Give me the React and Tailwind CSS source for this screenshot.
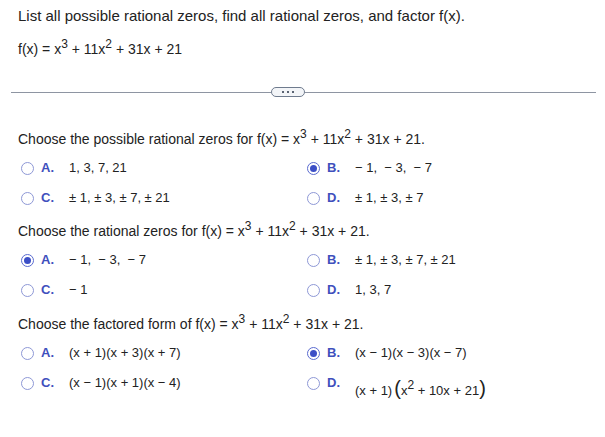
import React from 'react';

const Label = ({ children }) => (
  <span className="w-[28px] shrink-0 font-bold text-[#3f50bd]">{children}</span>
);

function Radio({ checked }) {
  return checked ? (
    <span className="w-[13px] h-[13px] rounded-full border border-[#5a6bd0] bg-white flex items-center justify-center shrink-0">
      <span className="w-[7px] h-[7px] rounded-full bg-[#3c4fc6]" />
    </span>
  ) : (
    <span className="w-[13px] h-[13px] rounded-full border border-[#8e98d6] bg-white shrink-0" />
  );
}

function Option({ letter, checked, children, valueClass = 'whitespace-pre' }) {
  return (
    <div className="h-[30px] flex items-center">
      <Radio checked={checked} />
      <span className="w-[7px] shrink-0" />
      <Label>{letter}</Label>
      <span className={valueClass}>{children}</span>
    </div>
  );
}

const Sup = ({ children }) => (
  <span className="relative -top-[6px] text-[12px]">{children}</span>
);

const Fx = ({ dot }) => (
  <span>
    f(x) = x<Sup>3</Sup> + 11x<Sup>2</Sup> + 31x + 21{dot ? '.' : ''}
  </span>
);

function Question({ title, options, className = '' }) {
  return (
    <div className={className}>
      <div className="h-[20px] leading-[20px] pl-[18px] text-[14px] whitespace-nowrap">
        {title} <Fx dot />
      </div>
      <div className="grid grid-cols-[286px_1fr] pl-[21px] mt-[4px]">
        {options.map((o) => (
          <Option key={o.letter} letter={o.letter} checked={o.checked} valueClass={o.valueClass}>
            {o.value}
          </Option>
        ))}
      </div>
    </div>
  );
}

export default function App() {
  return (
    <div className="w-[605px] h-[437px] bg-white text-[13px] text-[#222] font-['Liberation_Sans',Arial,sans-serif] overflow-hidden">
      <div className="pt-[6px] h-[26px] leading-[20px] pl-[18px] text-[15px]">
        List all possible rational zeros, find all rational zeros, and factor f(x).
      </div>
      <div className="mt-[13px] h-[20px] leading-[20px] pl-[18px] text-[14px]">
        <Fx />
      </div>

      {/* divider with the ... toggle */}
      <div className="mt-[28px] flex items-center pl-[11px] pr-[9px]">
        <div className="w-[260px] h-px bg-[#8e95a2]" />
        <div className="w-[34px] h-[10px] rounded-full border border-[#6f7b8e] bg-[#f3f5f8] flex items-center justify-center gap-[3px]">
          <span className="w-[2px] h-[2px] bg-[#5b6473]" />
          <span className="w-[2px] h-[2px] bg-[#5b6473]" />
          <span className="w-[2px] h-[2px] bg-[#5b6473]" />
        </div>
        <div className="flex-1 h-px bg-[#8e95a2]" />
      </div>

      <Question
        className="mt-[32px]"
        title="Choose the possible rational zeros for"
        options={[
          { letter: 'A.', value: '1, 3, 7, 21' },
          { letter: 'B.', checked: true, value: '\u2212 1,  \u2212 3,  \u2212 7' },
          { letter: 'C.', value: '\u00b1 1, \u00b1 3, \u00b1 7, \u00b1 21' },
          { letter: 'D.', value: '\u00b1 1, \u00b1 3, \u00b1 7' },
        ]}
      />

      <Question
        className="mt-[8px]"
        title="Choose the rational zeros for"
        options={[
          { letter: 'A.', checked: true, value: '\u2212 1,  \u2212 3,  \u2212 7' },
          { letter: 'B.', value: '\u00b1 1, \u00b1 3, \u00b1 7, \u00b1 21' },
          { letter: 'C.', value: '\u2212 1' },
          { letter: 'D.', value: '1, 3, 7' },
        ]}
      />

      <Question
        className="mt-[9px]"
        title="Choose the factored form of"
        options={[
          { letter: 'A.', value: '(x + 1)(x + 3)(x + 7)' },
          { letter: 'B.', checked: true, value: '(x \u2212 1)(x \u2212 3)(x \u2212 7)' },
          { letter: 'C.', value: '(x \u2212 1)(x + 1)(x \u2212 4)' },
          {
            letter: 'D.',
            valueClass: 'pt-[12px] whitespace-nowrap',
            value: (
              <span>
                (x + 1)
                <span className="text-[20px] leading-none ml-[2px]">(</span>x<Sup>2</Sup> + 10x + 21
                <span className="text-[20px] leading-none">)</span>
              </span>
            ),
          },
        ]}
      />
    </div>
  );
}
